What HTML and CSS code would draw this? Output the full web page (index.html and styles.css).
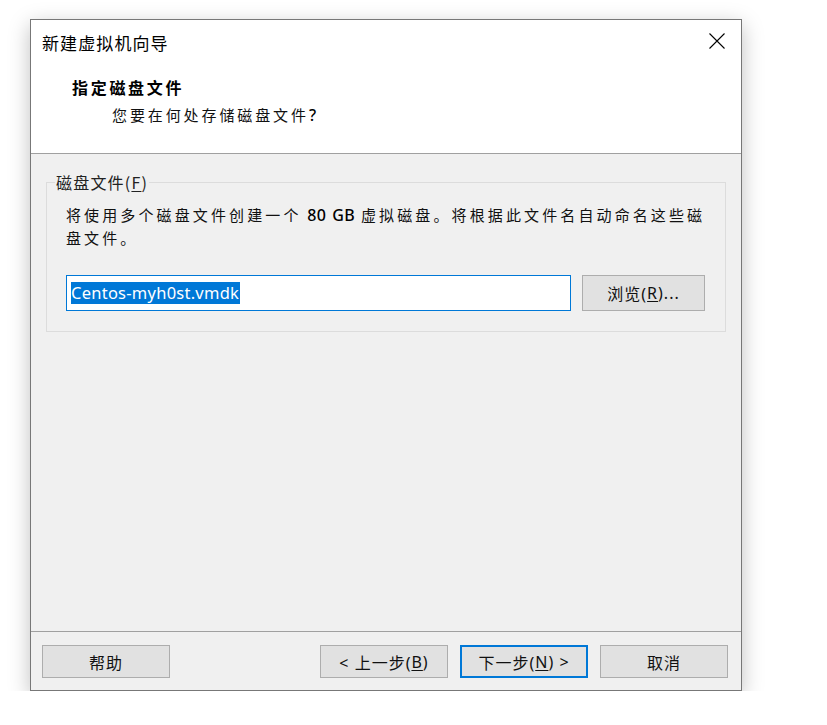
FILE: index.html
```html
<!DOCTYPE html>
<html lang="zh-CN">
<head>
<meta charset="utf-8">
<title>新建虚拟机向导</title>
<link rel="stylesheet" href="styles.css">
</head>
<body>
<div class="window">
  <div class="top">
    <div class="titlebar">
      <span class="title">新建虚拟机向导</span>
      <span class="close" aria-label="关闭">
        <svg width="16" height="16" viewBox="0 0 16 16"><path d="M0.5 0.5 L15.5 15.5 M15.5 0.5 L0.5 15.5" stroke="#000" stroke-width="1.1" fill="none"/></svg>
      </span>
    </div>
    <div class="header">
      <div class="h-title">指定磁盘文件</div>
      <div class="h-sub">您要在何处存储磁盘文件<span class="latin">?</span></div>
    </div>
  </div>
  <div class="body">
    <div class="group">
      <span class="group-label">磁盘文件(<u>F</u>)</span>
      <p class="desc">将使用多个磁盘文件创建一个<span class="latin"> 80 GB </span>虚拟磁盘。将根据此文件名自动命名这些磁<br>盘文件。</p>
      <div class="row">
        <div class="textbox"><span class="sel">Centos-myh0st.vmdk</span></div>
        <button class="btn browse">浏览(<u>R</u>)...</button>
      </div>
    </div>
  </div>
  <div class="footer">
    <button class="btn">帮助</button>
    <div class="spacer"></div>
    <button class="btn">&lt; 上一步(<u>B</u>)</button>
    <button class="btn primary">下一步(<u>N</u>) &gt;</button>
    <button class="btn">取消</button>
  </div>
</div>
</body>
</html>
```
FILE: styles.css
```css
* { box-sizing: border-box; }
html, body { margin: 0; padding: 0; background: #fff; }
body {
  font-family: "Noto Sans", "Noto Sans CJK SC", sans-serif;
  color: #000;
  padding: 19px 0 0 30px;
}
.window {
  width: 712px;
  height: 672px;
  border: 1px solid #777;
  background: #f0f0f0;
  display: flex;
  flex-direction: column;
  box-shadow: 0 6px 20px rgba(0,0,0,0.25);
}
.top {
  background: #fff;
  height: 134px;
  border-bottom: 1px solid #a0a0a0;
}
.titlebar {
  height: 44px;
  display: flex;
  align-items: center;
  justify-content: space-between;
  padding: 0 16px 0 11px;
}
.title {
  font-size: 17px;
  letter-spacing: 1.1px;
  font-family: "Noto Sans CJK SC", sans-serif;
}
.close { display: flex; width: 16px; height: 16px; margin-top: -2px; }
.header { padding-left: 41px; }
.h-title {
  font-family: "Noto Sans CJK SC", sans-serif;
  font-weight: 700;
  font-size: 16px;
  letter-spacing: 2.7px;
  line-height: 22px;
  margin-top: 12px;
}
.h-sub {
  font-family: "Noto Sans CJK SC", sans-serif;
  font-size: 15px;
  letter-spacing: 2.9px;
  line-height: 22px;
  padding-left: 40px;
  margin-top: 6px;
  color: #111;
}
.h-sub .latin {
  font-family: "Noto Sans", sans-serif;
  font-size: 16px;
  letter-spacing: 0;
  color: #000;
  font-weight: 500;
}
.body {
  flex: 1;
  padding: 28px 15px 0 15px;
}
.group {
  position: relative;
  border: 1px solid #dcdcdc;
  padding: 21px 20px 20px 19px;
}
.group-label {
  position: absolute;
  top: -12px;
  left: 8px;
  padding: 0 1px;
  background: #f0f0f0;
  font-size: 16px;
  letter-spacing: 1.2px;
  line-height: 22px;
  font-family: "Noto Sans CJK SC", sans-serif;
  color: #222;
}
.group-label u { text-underline-offset: 2px; }
.desc {
  margin: 0;
  white-space: nowrap;
  font-family: "Noto Sans", "Noto Sans CJK SC", sans-serif;
  font-size: 15px;
  letter-spacing: 3.12px;
  line-height: 23px;
  color: #111;
}
.desc .latin {
  font-size: 16px;
  letter-spacing: 0.5px;
  color: #000;
  font-weight: 500;
  word-spacing: 1px;
}
.row {
  display: flex;
  gap: 11px;
  margin-top: 25px;
}
.textbox {
  width: 505px;
  height: 36px;
  border: 1px solid #0078d7;
  background: #fff;
  padding: 2px 4px;
  display: flex;
  align-items: center;
}
.sel {
  background: #0078d7;
  color: #fff;
  font-family: "Noto Sans", sans-serif;
  font-size: 16.5px;
  line-height: 22px;
  letter-spacing: 0.25px;
  padding-right: 1px;
}
.btn {
  width: 128px;
  height: 33px;
  border: 1px solid #adadad;
  background: #e1e1e1;
  font-family: "Noto Sans", "Noto Sans CJK SC", sans-serif;
  font-size: 16px;
  letter-spacing: 1px;
  color: #111;
  padding: 0;
  margin: 0;
  display: flex;
  align-items: center;
  justify-content: center;
}
.btn u { text-underline-offset: 2px; }
.browse { width: 123px; height: 36px; }
.primary { border: 2px solid #0078d7; }
.footer {
  border-top: 1px solid #a0a0a0;
  height: 59px;
  display: flex;
  align-items: flex-start;
  padding: 13px 13px 0 11px;
  gap: 12px;
}
.spacer { flex: 1; }
```
